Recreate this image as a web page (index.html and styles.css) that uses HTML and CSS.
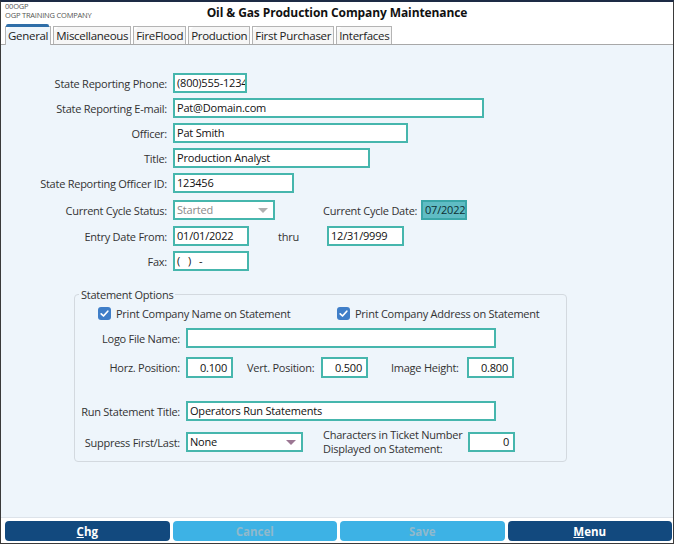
FILE: index.html
```html
<!DOCTYPE html>
<html>
<head>
<meta charset="utf-8">
<link rel="stylesheet" href="styles.css">
</head>
<body>
<div class="window">
  <header class="titlebar">
    <div class="company">
      <div class="code">00OGP</div>
      <div class="cname">OGP TRAINING COMPANY</div>
    </div>
    <div class="title">Oil &amp; Gas Production Company Maintenance</div>
  </header>
  <nav class="tabs">
    <div class="tab active">General</div>
    <div class="tab">Miscellaneous</div>
    <div class="tab">FireFlood</div>
    <div class="tab">Production</div>
    <div class="tab">First Purchaser</div>
    <div class="tab">Interfaces</div>
  </nav>
  <main class="content">
    <div class="row">
      <label class="lbl">State Reporting Phone:</label>
      <div class="field w-phone">(800)555-1234</div>
    </div>
    <div class="row">
      <label class="lbl">State Reporting E-mail:</label>
      <div class="field w-email">Pat@Domain.com</div>
    </div>
    <div class="row">
      <label class="lbl">Officer:</label>
      <div class="field w-officer">Pat Smith</div>
    </div>
    <div class="row">
      <label class="lbl">Title:</label>
      <div class="field w-title">Production Analyst</div>
    </div>
    <div class="row">
      <label class="lbl">State Reporting Officer ID:</label>
      <div class="field w-id">123456</div>
    </div>
    <div class="row r-status">
      <label class="lbl">Current Cycle Status:</label>
      <div class="field select disabled w-status"><span>Started</span><span class="arrow gray"></span></div>
      <label class="lbl2 l-cycledate">Current Cycle Date:</label>
      <div class="field highlight w-cycle">07/2022</div>
    </div>
    <div class="row r-entry">
      <label class="lbl">Entry Date From:</label>
      <div class="field w-date">01/01/2022</div>
      <label class="lbl2 l-thru">thru</label>
      <div class="field w-date2">12/31/9999</div>
    </div>
    <div class="row r-fax">
      <label class="lbl">Fax:</label>
      <div class="field w-date">(&nbsp;&nbsp;&nbsp;)&nbsp;&nbsp;&nbsp;-</div>
    </div>

    <fieldset class="group">
      <legend>Statement Options</legend>
      <div class="checks">
        <div class="check c1"><span class="box"><svg viewBox="0 0 13 13" width="13" height="13"><path d="M3.2 6.8 L5.5 9 L9.8 4.2" fill="none" stroke="#fff" stroke-width="1.7" stroke-linecap="round" stroke-linejoin="round"/></svg></span>Print Company Name on Statement</div>
        <div class="check c2"><span class="box"><svg viewBox="0 0 13 13" width="13" height="13"><path d="M3.2 6.8 L5.5 9 L9.8 4.2" fill="none" stroke="#fff" stroke-width="1.7" stroke-linecap="round" stroke-linejoin="round"/></svg></span>Print Company Address on Statement</div>
      </div>
      <div class="grow g-logo">
        <label class="glbl">Logo File Name:</label>
        <div class="field w-logo"></div>
      </div>
      <div class="grow g-pos">
        <label class="glbl">Horz. Position:</label>
        <div class="field num w-num">0.100</div>
        <label class="lbl2 l-vert">Vert. Position:</label>
        <div class="field num w-num">0.500</div>
        <label class="lbl2 l-img">Image Height:</label>
        <div class="field num w-num">0.800</div>
      </div>
      <div class="grow g-run">
        <label class="glbl">Run Statement Title:</label>
        <div class="field w-logo">Operators Run Statements</div>
      </div>
      <div class="grow g-sup">
        <label class="glbl">Suppress First/Last:</label>
        <div class="field select w-sup"><span>None</span><span class="arrow mauve"></span></div>
        <label class="lbl2 l-chars">Characters in Ticket Number<br>Displayed on Statement:</label>
        <div class="field num w-num">0</div>
      </div>
    </fieldset>
  </main>
  <footer class="buttons">
    <button class="btn dark"><u>C</u>hg</button>
    <button class="btn light">Cancel</button>
    <button class="btn light">Save</button>
    <button class="btn dark"><u>M</u>enu</button>
  </footer>
</div>
</body>
</html>
```
FILE: styles.css
```css
* { box-sizing: border-box; }
html, body { margin: 0; padding: 0; }
body {
  width: 674px;
  height: 544px;
  font-family: "Open Sans", "Noto Sans", sans-serif;
  font-size: 11px;
  letter-spacing: -0.25px;
  color: #222;
  background: #fff;
}
.window {
  width: 674px;
  height: 544px;
  border: 1px solid #3a3a3a;
  border-top: 2px solid #1d2b45;
  display: flex;
  flex-direction: column;
  background: #fff;
}
.titlebar {
  height: 22px;
  position: relative;
  display: flex;
  align-items: flex-start;
}
.company {
  padding-left: 4px;
  color: #555;
  font-size: 7.5px;
  line-height: 9px;
  letter-spacing: -0.2px;
}
.title {
  position: absolute;
  left: 0; right: 0; top: 2px;
  text-align: center;
  font-weight: bold;
  font-size: 12px;
  letter-spacing: -0.1px;
  color: #111;
}
.tabs {
  height: 21px;
  display: flex;
  align-items: flex-end;
  gap: 2px;
  padding-left: 4px;
  border-bottom: 1px solid #a8a8a8;
}
.tab {
  height: 18px;
  padding: 0 2px;
  border: 1px solid #b4b4b4;
  border-bottom: none;
  background: #f6f6f6;
  font-size: 11.5px;
  letter-spacing: -0.3px;
  line-height: 17px;
  color: #222;
  position: relative;
}
.tab::before {
  content: "";
  position: absolute;
  left: 0; top: 0;
  border-top: 4px solid #fff;
  border-right: 4px solid transparent;
}
.tab.active {
  background: #eef5fb;
  height: 19px;
  margin-bottom: -1px;
}
.tab.active::after {
  content: "";
  position: absolute;
  left: 0; right: 1px; top: -3px;
  height: 3px;
  background: #2f6ea8;
  border-radius: 2px 2px 0 0;
}
.content {
  flex: 1;
  background: #eef5fb;
  padding-top: 28px;
  display: flex;
  flex-direction: column;
}
.row {
  display: flex;
  align-items: center;
  height: 20px;
  margin-bottom: 5px;
}
.r-status { margin-top: 2px; margin-bottom: 6px; }
.r-fax { margin-bottom: 0; }
.lbl {
  width: 172px;
  text-align: right;
  padding-right: 6px;
  color: #333;
  white-space: nowrap;
}
.lbl2 { color: #333; white-space: nowrap; flex: none; }
.field {
  flex: none;
  height: 20px;
  border: 2px solid #46b6ad;
  background: #fff;
  padding: 0 2px;
  line-height: 16px;
  color: #111;
  font-size: 11px;
  letter-spacing: -0.2px;
  white-space: nowrap;
  overflow: hidden;
}
.w-phone { width: 74px; }
.w-email { width: 311px; }
.w-officer { width: 235px; }
.w-title { width: 197px; }
.w-id { width: 121px; }
.w-status { width: 102px; }
.w-cycle { width: 46px; }
.w-date { width: 76px; }
.w-date2 { width: 77px; }
.l-cycledate { margin-left: 48px; width: 98px; }
.l-thru { margin-left: 29px; width: 49px; }
.select { display: flex; justify-content: space-between; align-items: center; }
.select.disabled { color: #8a8a8a; }
.arrow {
  width: 0; height: 0;
  border-left: 5px solid transparent;
  border-right: 5px solid transparent;
  border-top: 5px solid #b0b0b0;
  margin-right: 3px;
}
.arrow.mauve { border-top-color: #9c7793; }
.highlight {
  background: #5fbcc4;
  border-color: #3aa6a8;
  color: #0e2f33;
}
.group {
  margin: 16px 0 0 73px;
  width: 493px;
  height: 175px;
  border: 1px solid #d3d9df;
  border-radius: 4px;
  padding: 0;
  position: relative;
}
.group legend {
  padding: 0 2px;
  margin-left: 4px;
  color: #333;
  font-size: 11px;
}
.checks {
  display: flex;
  height: 16px;
  align-items: center;
  margin-top: 3px;
}
.check { display: flex; align-items: center; color: #333; white-space: nowrap; }
.c1 { margin-left: 23px; width: 239px; }
.box {
  width: 13px; height: 13px;
  background: #3f7ec8;
  border-radius: 3px;
  margin-right: 5px;
  display: inline-flex;
}
.grow { display: flex; align-items: center; height: 20px; }
.g-logo { margin-top: 7px; }
.g-pos { margin-top: 9px; height: 21px; }
.g-pos .field { height: 21px; line-height: 17px; }
.g-run { margin-top: 23px; }
.g-sup { margin-top: 11px; }
.glbl {
  width: 111px;
  text-align: right;
  padding-right: 6px;
  color: #333;
  white-space: nowrap;
}
.w-logo { width: 310px; }
.w-num { width: 47px; }
.num { text-align: right; padding-right: 4px; }
.l-vert { margin-left: 14px; width: 74px; }
.l-img { margin-left: 23px; width: 76px; }
.w-sup { width: 117px; }
.l-chars { margin-left: 20px; width: 145px; line-height: 14px; }
.buttons {
  height: 26px;
  display: flex;
  gap: 3px;
  padding: 3px 1px 1px 4px;
  background: #fff;
  border-top: 1px solid #dde3ea;
}
.btn {
  flex: 1;
  height: 20px;
  border: none;
  border-radius: 4px;
  font-family: "Open Sans", "Noto Sans", sans-serif;
  font-size: 11.5px;
  font-weight: bold;
  padding: 0;
}
.btn.dark { background: #12497e; color: #fff; }
.btn.light { background: #3db2e5; color: #8fb9cc; }
```
